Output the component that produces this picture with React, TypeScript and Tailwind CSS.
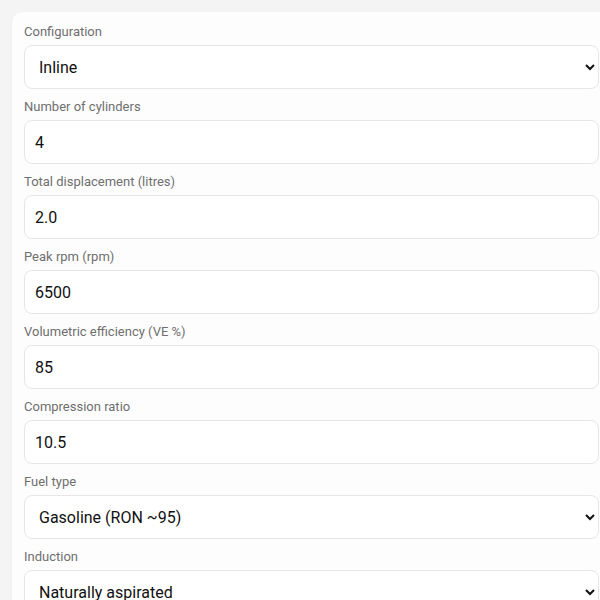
import React from "react";

type Field =
  | { label: string; kind: "select"; value: string; options: string[] }
  | { label: string; kind: "input"; value: string };

const fields: Field[] = [
  { label: "Configuration", kind: "select", value: "Inline", options: ["Inline", "V", "Flat (boxer)"] },
  { label: "Number of cylinders", kind: "input", value: "4" },
  { label: "Total displacement (litres)", kind: "input", value: "2.0" },
  { label: "Peak rpm (rpm)", kind: "input", value: "6500" },
  { label: "Volumetric efficiency (VE %)", kind: "input", value: "85" },
  { label: "Compression ratio", kind: "input", value: "10.5" },
  { label: "Fuel type", kind: "select", value: "Gasoline (RON ~95)", options: ["Gasoline (RON ~95)", "Diesel", "E85"] },
  { label: "Induction", kind: "select", value: "Naturally aspirated", options: ["Naturally aspirated", "Turbocharged", "Supercharged"] },
];

export default function App() {
  return (
    <div
      className="h-[600px] w-[600px] overflow-hidden bg-[#f4f4f4] pl-3 pt-3"
      style={{ fontFamily: "Roboto, 'Noto Sans', sans-serif" }}
    >
      <div className="w-[599px] rounded-[10px] bg-[#fdfdfd] px-3 pt-[10px] pb-4 shadow-[0_1px_3px_rgba(0,0,0,0.05)]">
        {fields.map((f) => (
          <div key={f.label} className="mb-2">
            <div className="mb-[3px] h-5 text-[13px] leading-5 text-[#6f6f6f]">{f.label}</div>
            {f.kind === "select" ? (
              <select
                defaultValue={f.value}
                className="block h-[44px] w-full rounded-lg border border-[#e6e6e6] bg-white pl-[10px] pr-[6px] text-[16px] text-[#111111]"
              >
                {f.options.map((o) => (
                  <option key={o}>{o}</option>
                ))}
              </select>
            ) : (
              <input
                defaultValue={f.value}
                className="block h-[44px] w-full rounded-lg border border-[#e6e6e6] bg-white px-[10px] text-[16px] text-[#111111] outline-none"
              />
            )}
          </div>
        ))}
      </div>
    </div>
  );
}
